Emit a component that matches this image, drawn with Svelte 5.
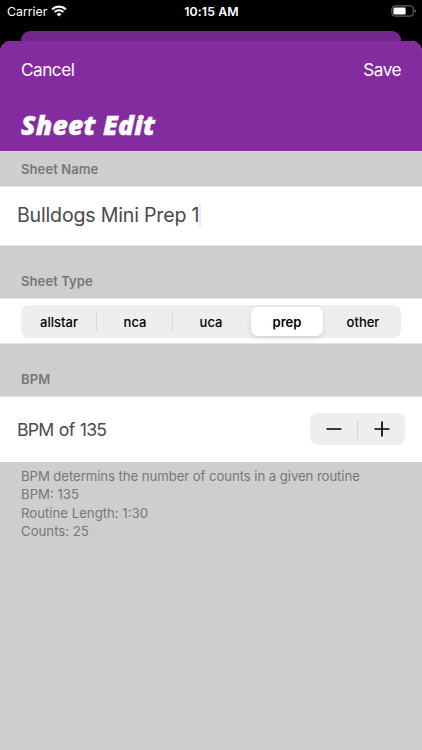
<script lang="ts">
    type SheetType = "allstar" | "nca" | "uca" | "prep" | "other";

    const sheetTypes: SheetType[] = ["allstar", "nca", "uca", "prep", "other"];

    let sheetName = $state("Bulldogs Mini Prep 1");
    let selected: SheetType = $state("prep");
    let bpm = $state(135);

    const routineSeconds = 90;
    const beatsPerCount = 8;

    let counts = $derived(Math.floor((bpm * routineSeconds) / 60 / beatsPerCount));
    let routineLength = $derived(
        Math.floor(routineSeconds / 60) + ":" + String(routineSeconds % 60).padStart(2, "0")
    );
</script>

<div class="screen">
    <div class="status">
        <div class="carrier">
            <span>Carrier</span>
            <svg width="16" height="12" viewBox="0 0 16 12" fill="none" stroke="#fff">
                <path d="M1.2 4.3a9.8 9.8 0 0 1 13.6 0" stroke-width="2.3" />
                <path d="M3.6 7a6.3 6.3 0 0 1 8.8 0" stroke-width="2.1" />
                <path d="M8 11.6 5.6 9.2a3.4 3.4 0 0 1 4.8 0z" fill="#fff" stroke="none" />
            </svg>
        </div>
        <span class="time">10:15 AM</span>
        <svg class="battery" width="26" height="12" viewBox="0 0 26 12">
            <rect x="0.9" y="0.9" width="21.4" height="10.2" rx="2.8" fill="none" stroke="#777" />
            <rect x="2.4" y="2.4" width="12.2" height="7.2" rx="1.4" fill="#fff" />
            <path d="M23.7 4.2q1.3.6 1.3 1.8t-1.3 1.8z" fill="#777" />
        </svg>
    </div>

    <div class="behind"></div>

    <div class="sheet">
        <header>
            <nav>
                <button class="cancel">Cancel</button>
                <button class="save">Save</button>
            </nav>
            <h1>Sheet Edit</h1>
        </header>

        <h2 class="first">Sheet Name</h2>
        <div class="row name">
            <span>{sheetName}</span><i class="caret"></i>
        </div>

        <h2>Sheet Type</h2>
        <div class="row type">
            <div class="segments">
                {#each sheetTypes as type}
                    <button class:active={type === selected} onclick={() => (selected = type)}>
                        {type}
                    </button>
                {/each}
            </div>
        </div>

        <h2>BPM</h2>
        <div class="row bpm">
            <span>BPM of {bpm}</span>
            <div class="stepper">
                <button aria-label="Decrease" onclick={() => bpm--}>
                    <svg width="16" height="16" viewBox="0 0 16 16"><path d="M1.2 8h13.6" /></svg>
                </button>
                <button aria-label="Increase" onclick={() => bpm++}>
                    <svg width="16" height="16" viewBox="0 0 16 16"><path d="M1.2 8h13.6M8 1.2v13.6" /></svg>
                </button>
            </div>
        </div>

        <div class="info">
            <p class="hint">BPM determins the number of counts in a given routine</p>
            <p>BPM: {bpm}</p>
            <p>Routine Length: {routineLength}</p>
            <p>Counts: {counts}</p>
        </div>
    </div>
</div>

<style>
    :global(body) {
        background: #000;
    }

    .screen {
        box-sizing: border-box;
        width: 422px;
        height: 750px;
        display: flex;
        flex-direction: column;
        overflow: hidden;
        background: #000;
        font-family: Inter, "Liberation Sans", sans-serif;
    }

    button {
        padding: 0;
        border: 0;
        background: none;
        font-family: inherit;
        color: inherit;
    }

    .status {
        height: 31px;
        flex: none;
        display: grid;
        grid-template-columns: 1fr auto 1fr;
        box-sizing: border-box;
        padding: 0 5px 9px 7px;
        align-items: center;
        color: #fff;
        font-size: 12.3px;
    }

    .carrier {
        display: flex;
        align-items: center;
        gap: 4px;
    }

    .time {
        font-weight: 600;
        letter-spacing: 0.1px;
        margin-right: 1px;
    }

    .battery {
        justify-self: end;
    }

    .behind {
        flex: none;
        height: 10px;
        margin: 0 21px;
        border-radius: 9px 9px 0 0;
        background: #74278c;
    }

    .sheet {
        flex: 1;
        overflow: hidden;
        border-radius: 11px 11px 0 0;
        background: #cecece;
    }

    header {
        height: 110px;
        background: #842ba0;
        color: #fff;
        overflow: hidden;
    }

    nav {
        display: flex;
        justify-content: space-between;
        padding: 18px 21px 0;
    }

    nav button {
        font-size: 17.2px;
        line-height: 22px;
        letter-spacing: -0.5px;
    }

    h1 {
        margin: 26px 21px 0;
        font: italic 800 26.5px/36px "Open Sans", sans-serif;
        letter-spacing: 0.2px;
        -webkit-text-stroke: 0.4px #fff;
    }

    h2 {
        box-sizing: border-box;
        height: 52px;
        margin: 0;
        padding: 26px 21px 0;
        color: #77777b;
        font-size: 13px;
        font-weight: 600;
        line-height: 18px;
        letter-spacing: 0.1px;
    }

    h2.first {
        height: 35px;
        padding-top: 8px;
        border-top: 1px solid #d8cddb;
    }

    .row {
        box-sizing: border-box;
        display: flex;
        align-items: center;
        padding-left: 17px;
        border-top: 1px solid #e3e3e3;
        border-bottom: 1px solid #e3e3e3;
        background: #fff;
        color: #4a4a4a;
    }

    .name {
        height: 60px;
        padding-bottom: 2px;
        font-size: 19.6px;
        letter-spacing: -0.2px;
    }

    .caret {
        width: 2px;
        height: 24px;
        background: #e6edfa;
    }

    .type {
        height: 46px;
        padding: 0 21px;
    }

    .segments {
        flex: 1;
        box-sizing: border-box;
        height: 33px;
        display: grid;
        grid-template-columns: repeat(5, 1fr);
        margin-top: 1px;
        padding: 2px 0;
        border-radius: 8px;
        background: #eeeeef;
        color: #000;
    }

    .segments button {
        position: relative;
        margin: 0 2px;
        border-radius: 7px;
        font-size: 13px;
        font-weight: 500;
    }

    .segments button:nth-child(-n + 2)::after {
        content: "";
        position: absolute;
        right: -2px;
        top: 5px;
        width: 1px;
        height: 19px;
        background: #d7d7da;
    }

    .segments .active {
        background: #fff;
        box-shadow: 0 2px 5px rgba(0, 0, 0, 0.13);
        font-weight: 600;
    }

    .bpm {
        height: 66px;
        justify-content: space-between;
        padding-right: 17px;
        border-bottom: 0;
        font-size: 17.7px;
        letter-spacing: -0.75px;
        word-spacing: 1px;
    }

    .stepper {
        width: 95px;
        height: 32px;
        display: flex;
        align-items: center;
        margin-bottom: 1px;
        border-radius: 8px;
        background: #eeeeef;
    }

    .stepper button {
        flex: 1;
        height: 18px;
        display: flex;
        align-items: center;
        justify-content: center;
    }

    .stepper button + button {
        border-left: 1px solid #d3d3d6;
    }

    .stepper path {
        stroke: #000;
        stroke-width: 1.7;
        stroke-linecap: round;
    }

    .info {
        padding: 5px 21px;
        color: #77777b;
        font-size: 13.2px;
        line-height: 18.3px;
    }

    .info p {
        margin: 0;
    }

    .info .hint {
        letter-spacing: -0.08px;
    }
</style>
